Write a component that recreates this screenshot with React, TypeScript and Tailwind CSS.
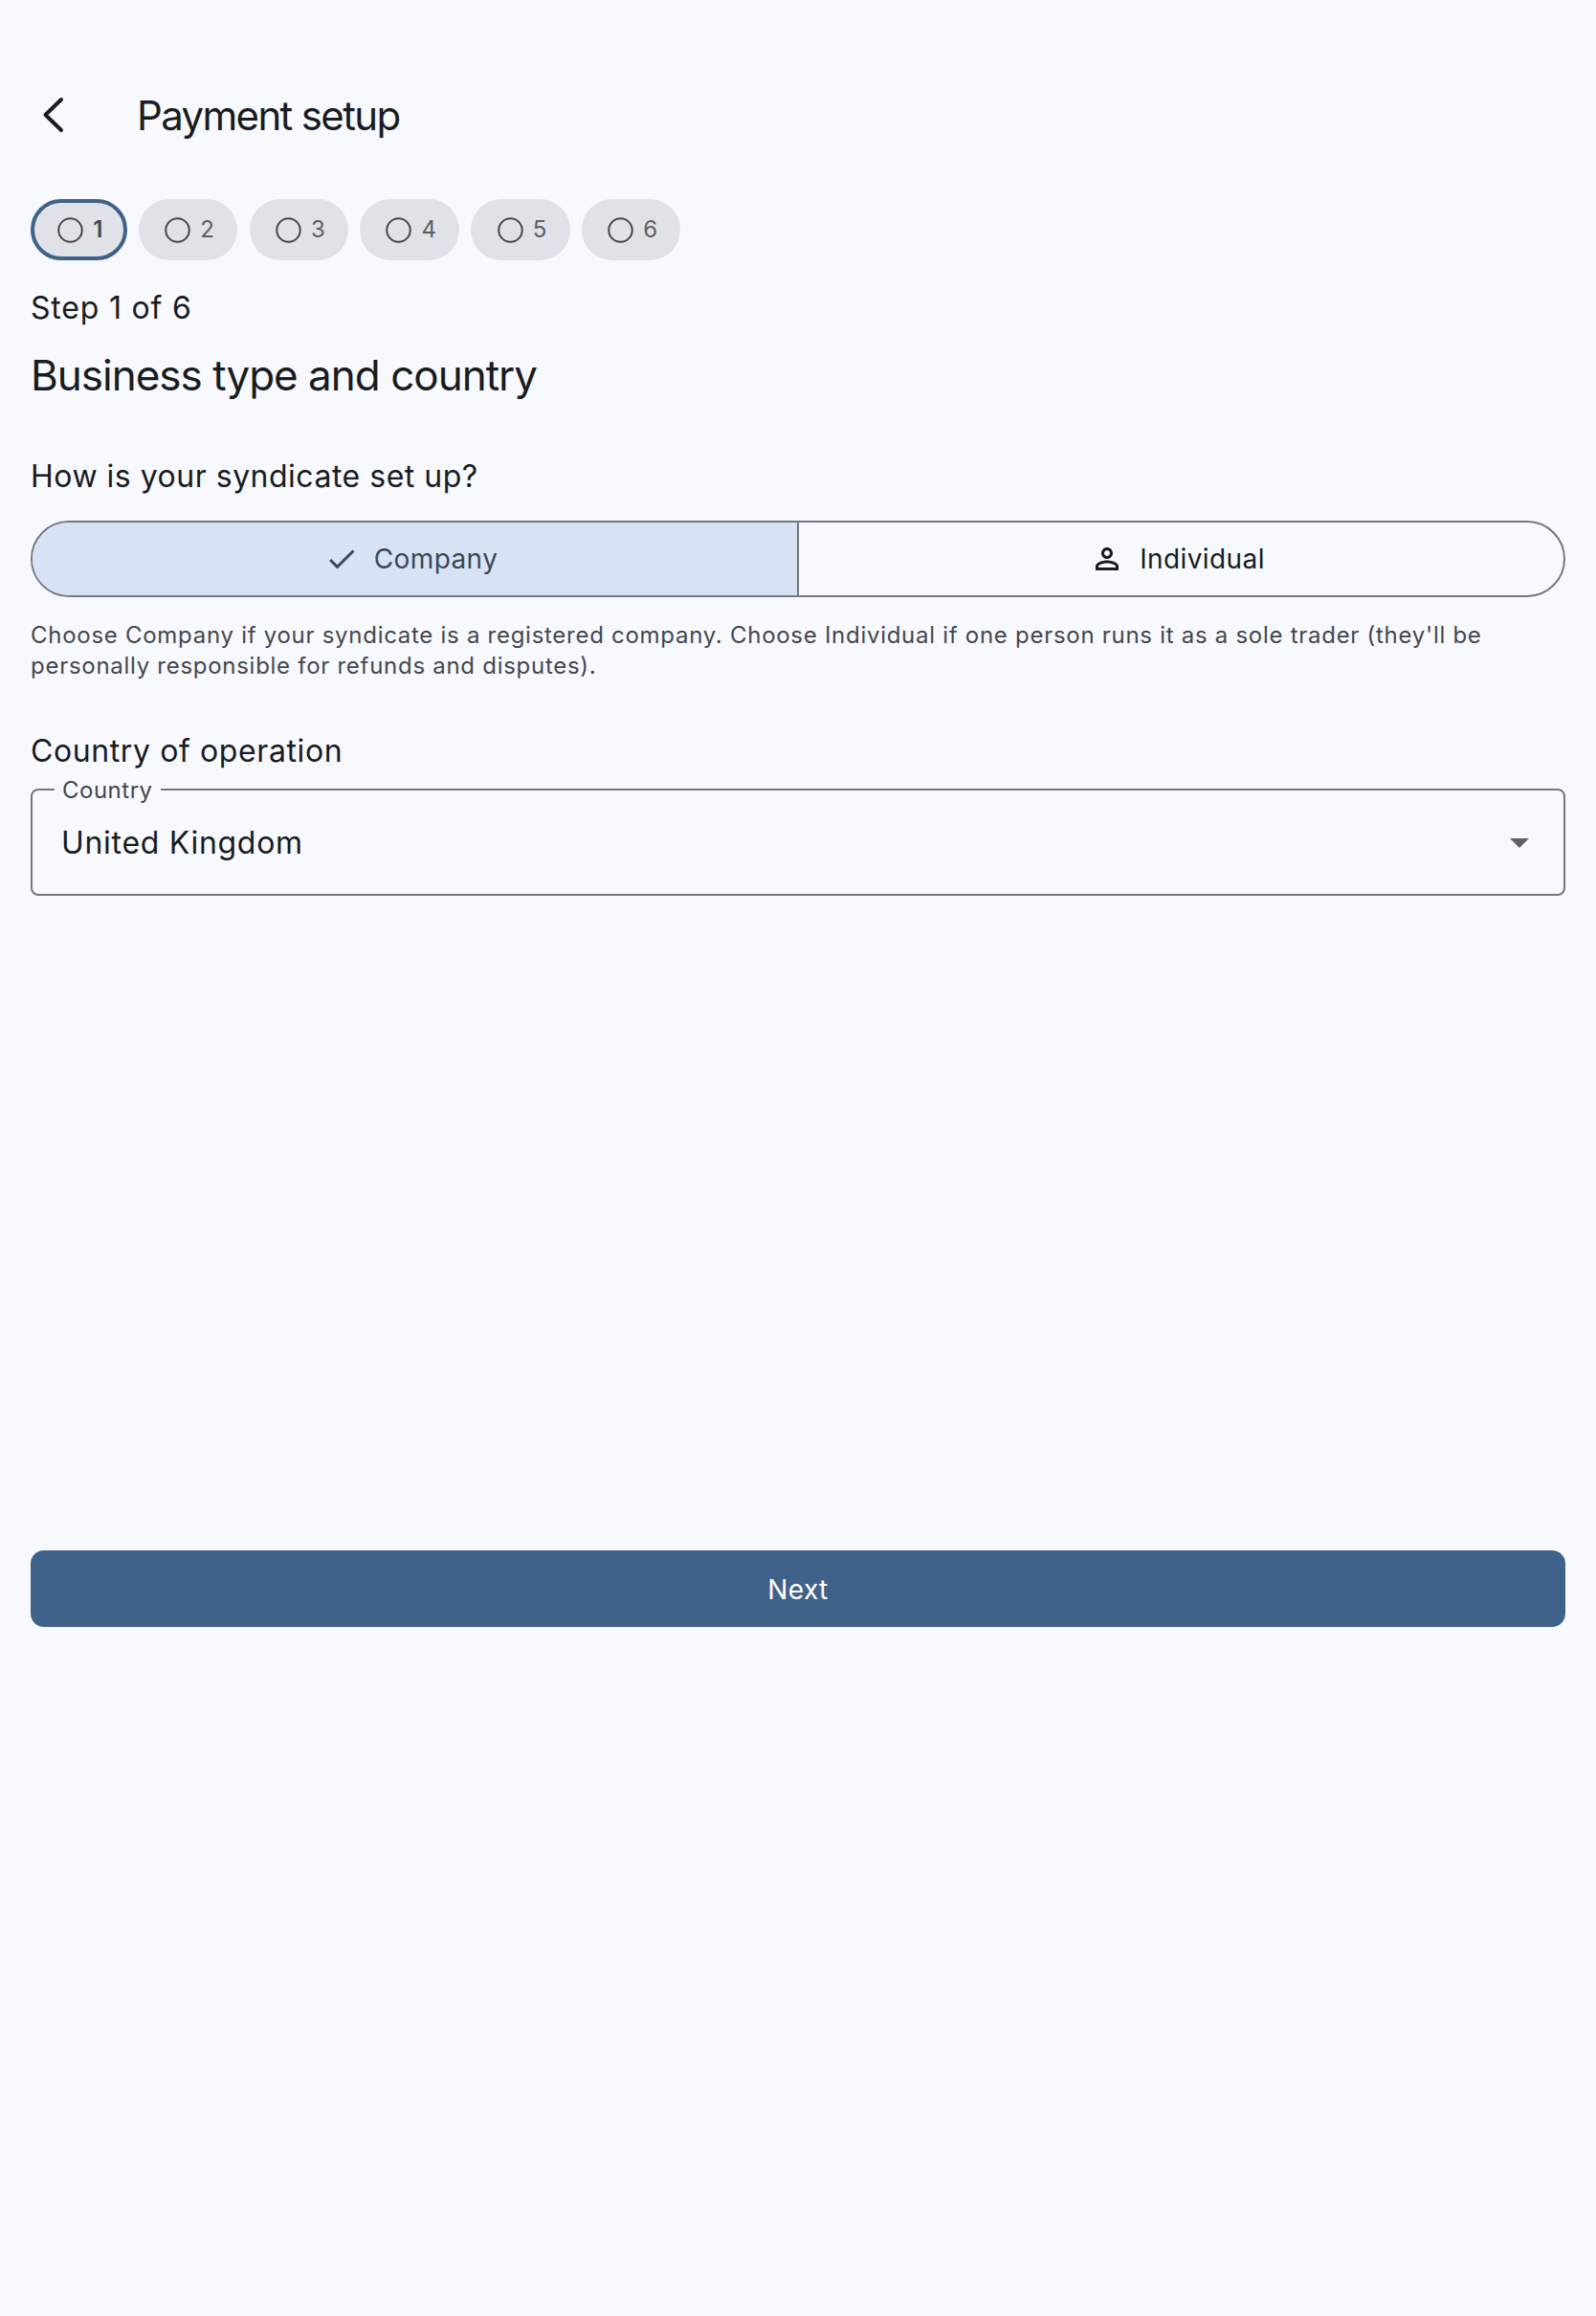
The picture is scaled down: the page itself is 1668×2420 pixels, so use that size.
const inter = "font-['Inter',sans-serif]";

function Chip({ n, active }: { n: number; active?: boolean }) {
  return (
    <div
      className={
        active
          ? "flex h-16 w-[100.5px] items-center justify-center gap-[10px] rounded-[32px] border-4 border-[#3f628a] bg-[#e1e2e8] pl-[3px]"
          : "flex h-16 w-[103.5px] items-center justify-center gap-[10px] rounded-[32px] bg-[#e1e2e8] pl-[3px]"
      }
    >
      <svg width="27" height="27" viewBox="0 0 27 27" fill="none" className="shrink-0">
        <circle cx="13.5" cy="13.5" r="12.25" stroke="#43474e" strokeWidth="2" />
      </svg>
      <span className={active ? "text-[24px] font-semibold text-[#43474e]" : "text-[24px] text-[#5b5f66]"}>{n}</span>
    </div>
  );
}

export default function App() {
  return (
    <div className={`${inter} flex min-h-[2420px] w-full flex-col bg-[#f8f9ff] px-8 text-[#191c20]`}>
      <header className="mt-16 flex h-[112px] items-center">
        <svg width="48" height="48" viewBox="0 0 48 48" fill="none" className="mr-[63px] shrink-0">
          <path d="M32 8 15.5 24 32 40" stroke="#191c20" strokeWidth="4" strokeLinecap="round" strokeLinejoin="round" />
        </svg>
        <h1 className="text-[42px] font-normal tracking-[-1.65px]">Payment setup</h1>
      </header>
      <div className="mt-8 flex gap-[12.3px]">
        <Chip n={1} active />
        {[2, 3, 4, 5, 6].map((n) => (
          <Chip key={n} n={n} />
        ))}
      </div>
      <p className="mt-[30px] text-[32px] leading-[40px] tracking-[0.8px]">Step 1 of 6</p>
      <h2 className="mt-[22px] text-[44px] font-normal leading-[56px] tracking-[-1px]">Business type and country</h2>
      <p className="mt-[58px] text-[32px] leading-[40px] tracking-[0.5px]">How is your syndicate set up?</p>
      <div className="mt-[26px] flex h-20 w-full overflow-hidden rounded-[40px] border-2 border-[#73777f]">
        <div className="flex flex-1 items-center justify-center gap-4 border-r-2 border-[#73777f] bg-[#d7e3f5] pr-2 text-[28px] tracking-[0.4px] text-[#3a4858]">
          <svg width="36" height="36" viewBox="0 0 24 24" fill="#3a4858"><path d="M9 16.2L4.8 12l-1.4 1.4L9 19 21 7l-1.4-1.4L9 16.2z" /></svg>
          Company
        </div>
        <div className="flex flex-1 items-center justify-center gap-4 pr-2 text-[28px] tracking-[0.4px]">
          <svg width="36" height="36" viewBox="0 0 24 24" fill="#191c20"><path d="M12 6c1.1 0 2 .9 2 2s-.9 2-2 2-2-.9-2-2 .9-2 2-2m0 9c2.7 0 5.8 1.29 6 2v1H6v-.99c.2-.72 3.3-2.01 6-2.01M12 4C9.79 4 8 5.79 8 8s1.79 4 4 4 4-1.79 4-4-1.79-4-4-4zm0 9c-2.67 0-8 1.34-8 4v3h16v-3c0-2.66-5.33-4-8-4z" /></svg>
          Individual
        </div>
      </div>
      <p className="mt-[24px] text-[24px] leading-[32px] tracking-[0.72px] text-[#43474e]">
        Choose Company if your syndicate is a registered company. Choose Individual if one person runs it as a sole trader (they'll be personally responsible for refunds and disputes).
      </p>
      <p className="mt-[53px] text-[32px] leading-[40px] tracking-[0.6px]">Country of operation</p>
      <div className="relative mt-[19px] flex h-[112px] items-center justify-between rounded-lg border-2 border-[#73777f] pl-[30px] pr-[22px]">
        <span className="absolute -top-[16px] left-[23px] bg-[#f8f9ff] px-2 text-[24px] leading-[32px] tracking-[0.5px] text-[#43474e]">Country</span>
        <span className="pt-[2px] text-[32px] tracking-[0.7px]">United Kingdom</span>
        <svg width="48" height="48" viewBox="0 0 24 24" fill="#5f6368"><path d="M7 10l5 5 5-5z" /></svg>
      </div>
      <button className="mt-[684px] flex h-20 w-full items-center justify-center rounded-[14px] bg-[#3f628a] pt-[2px] text-[28px] tracking-[0.4px] text-white">Next</button>
    </div>
  );
}
